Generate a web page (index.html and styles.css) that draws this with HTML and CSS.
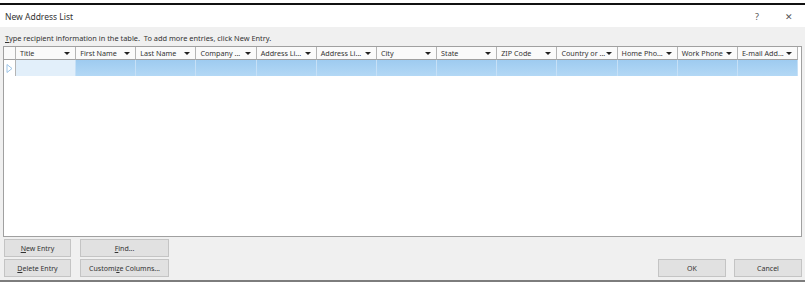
FILE: index.html
```html
<!DOCTYPE html>
<html lang="en">
<head>
    <meta charset="UTF-8">
    <title>New Address List</title>
    <link rel="stylesheet" href="styles.css">
</head>
<body>
    <div class="window">
        <div class="titlebar">
            <span class="title">New Address List</span>
            <span class="controls">
                <span class="help">?</span>
                <span class="close">&#x2715;</span>
            </span>
        </div>
        <div class="content">
            <div class="hint"><u>T</u>ype recipient information in the table.&nbsp; To add more entries, click New Entry.</div>
            <div class="grid">
                <div class="row head">
                    <div class="cell corner"></div>
                    <div class="cell">Title<span class="arrow"></span></div>
                    <div class="cell">First Name<span class="arrow"></span></div>
                    <div class="cell">Last Name<span class="arrow"></span></div>
                    <div class="cell">Company ...<span class="arrow"></span></div>
                    <div class="cell">Address Li...<span class="arrow"></span></div>
                    <div class="cell">Address Li...<span class="arrow"></span></div>
                    <div class="cell">City<span class="arrow"></span></div>
                    <div class="cell">State<span class="arrow"></span></div>
                    <div class="cell">ZIP Code<span class="arrow"></span></div>
                    <div class="cell">Country or ...<span class="arrow"></span></div>
                    <div class="cell">Home Pho...<span class="arrow"></span></div>
                    <div class="cell">Work Phone<span class="arrow"></span></div>
                    <div class="cell">E-mail Add...<span class="arrow"></span></div>
                </div>
                <div class="row data">
                    <div class="cell marker">
                        <svg width="7" height="9" viewBox="0 0 7 9"><path d="M1 0.5 L6 4.5 L1 8.5 Z" fill="none" stroke="#9cc3e6" stroke-width="1"/></svg>
                    </div>
                    <div class="cell current"></div>
                    <div class="cell"></div>
                    <div class="cell"></div>
                    <div class="cell"></div>
                    <div class="cell"></div>
                    <div class="cell"></div>
                    <div class="cell"></div>
                    <div class="cell"></div>
                    <div class="cell"></div>
                    <div class="cell"></div>
                    <div class="cell"></div>
                    <div class="cell"></div>
                    <div class="cell"></div>
                </div>
            </div>
            <div class="footer">
                <div class="actions">
                    <button class="btn"><u>N</u>ew Entry</button>
                    <button class="btn"><u>F</u>ind...</button>
                    <button class="btn"><u>D</u>elete Entry</button>
                    <button class="btn">Customi<u>z</u>e Columns...</button>
                </div>
                <div class="confirm">
                    <button class="btn">OK</button>
                    <button class="btn">Cancel</button>
                </div>
            </div>
        </div>
    </div>
</body>
</html>
```

FILE: styles.css
```css
body {
    margin: 0;
    padding-top: 3px;
    background: #ffffff;
    font-family: "Noto Sans", "Open Sans", sans-serif;
    color: #222;
}
.window {
    border-top: 2px solid #111;
    border-bottom: 2px solid #7d7d7d;
}
.titlebar {
    height: 22px;
    display: flex;
    align-items: center;
    justify-content: space-between;
    padding: 0 12px 0 5px;
    background: #ffffff;
}
.title {
    font-size: 8.5px;
    color: #333;
}
.controls {
    display: flex;
    gap: 26px;
    font-size: 9px;
    color: #555;
}
.content {
    height: 253px;
    box-sizing: border-box;
    background: #f0f0f0;
    padding: 3px 3px 3px 3px;
    display: flex;
    flex-direction: column;
}
.hint {
    height: 16px;
    line-height: 16px;
    font-size: 7.4px;
    padding-left: 2px;
    color: #333;
}
.grid {
    height: 191px;
    box-sizing: border-box;
    border: 1px solid #a0a0a0;
    background: #ffffff;
}
.row {
    display: grid;
    grid-template-columns: 12px repeat(13, 60.17px);
}
.cell {
    box-sizing: border-box;
    border-right: 1px solid #b4b4b4;
    position: relative;
}
.head {
    height: 13px;
}
.head .cell {
    background: #fafafa;
    border-bottom: 1px solid #a0a0a0;
    font-size: 7.2px;
    line-height: 12px;
    padding-left: 4px;
    white-space: nowrap;
    color: #333;
}
.arrow {
    position: absolute;
    right: 5px;
    top: 5px;
    border-left: 3px solid transparent;
    border-right: 3px solid transparent;
    border-top: 3px solid #222;
}
.data {
    height: 16px;
}
.data .cell {
    background: linear-gradient(#9ecbf0, #b3d8f5);
    border-right: 1px solid #c6e0f6;
}
.data .marker {
    background: #ffffff;
    border-right: 1px solid #b4b4b4;
    display: flex;
    align-items: center;
    justify-content: center;
}
.data .current {
    background: #e2effa;
}
.footer {
    display: flex;
    justify-content: space-between;
    align-items: flex-end;
    padding-left: 1px;
    margin-top: 2px;
}
.actions {
    display: grid;
    grid-template-columns: 67px 89px;
    column-gap: 9px;
    row-gap: 2px;
}
.confirm {
    display: flex;
    gap: 8px;
}
.confirm .btn {
    width: 68px;
}
.btn {
    height: 18px;
    box-sizing: border-box;
    padding: 0;
    background: #e1e1e1;
    border: 1px solid #c4c4c4;
    font-family: "Noto Sans", "Open Sans", sans-serif;
    font-size: 7px;
    color: #333;
}
```
